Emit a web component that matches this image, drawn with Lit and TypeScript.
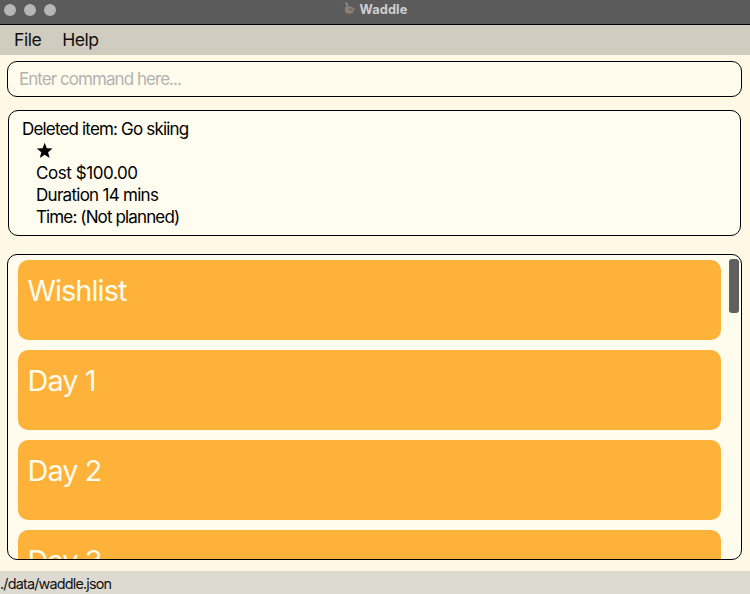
import { LitElement, html, css } from "lit";
import { customElement, property } from "lit/decorators.js";

@customElement("waddle-titlebar")
class WaddleTitlebar extends LitElement {
  static styles = css`
    :host { display: grid; grid-template-columns: 1fr auto 1fr; flex: none; height: 25px; background: #5b5b5b; border-bottom: 1px solid #000; }
    .lights { display: flex; gap: 8px; padding: 4px 0 0 4px; }
    .light { width: 12px; height: 12px; border-radius: 50%; background: #b6b6b6; }
    .title { display: flex; gap: 5px; padding-top: 1px; height: 17px; align-items: center; color: #cfcfcf; font-size: 12.8px; font-weight: 700; letter-spacing: 0.1px; }
    svg { display: block; width: 12px; height: 14px; margin-top: -2px; }
  `;
  render() {
    return html`
      <div class="lights"><span class="light"></span><span class="light"></span><span class="light"></span></div>
      <div class="title">
        <svg viewBox="0 0 12 14">
          <path d="M5.6 10.5V12.7H4.2M7.8 10.5V12.4H6.6" fill="none" stroke="#85604f" stroke-width="1" />
          <path d="M1.4 1.8Q1.9.2 3.5.3Q5.3.6 5.2 2.5L4.9 4.6Q7.6 3.8 9.5 5.4L11.5 6Q11.5 11.2 6.8 11.4Q2.1 11.4 1.7 8.4Q1.6 6.3 3 4.6L3 3L1.6 2.9Z" fill="#8d8177" />
          <path d="M.1 2.8L1.6 1.5L2.6 2.7L1.4 3.3Z" fill="#4b4644" />
          <path d="M5.3 6.9Q8 5.6 10.4 7Q9.7 9.2 7 9Q5.4 8.7 5.3 6.9" fill="#786d64" />
        </svg>
        <span>Waddle</span>
      </div>
      <span></span>
    `;
  }
}

@customElement("waddle-day-card")
class WaddleDayCard extends LitElement {
  @property() label = "";
  static styles = css`
    :host { display: block; flex: none; box-sizing: border-box; height: 80px; padding: 12px 9.5px; border-radius: 10px; background: #ffb239; color: #fffcee; font-size: 28.8px; line-height: 38px; letter-spacing: -0.9px; font-weight: 400; white-space: nowrap; }
  `;
  render() {
    return html`${this.label}`;
  }
}

@customElement("app-root")
class AppRoot extends LitElement {
  static styles = css`
    :host { display: flex; flex-direction: column; height: 594px; overflow: hidden; background: #fff8e5; color: #000; font-family: Inter, "Liberation Sans", sans-serif; }
    * { box-sizing: border-box; }
    .menu { display: flex; gap: 21px; height: 30px; padding-left: 14px; background: #d1ccc0; color: #111; font-size: 17.6px; line-height: 30px; letter-spacing: -0.5px; }
    .command { height: 36px; margin: 6px 8px 0 7px; padding: 0 11px; border: 1px solid #000; border-radius: 10px; background: #fffcee; color: #b3b3b1; font-size: 17px; line-height: 35px; letter-spacing: -0.95px; }
    .result { height: 126px; margin: 13px 9px 0 8px; padding: 7px 13px; border: 1px solid #000; border-radius: 10px; background: #fffcf0; font-size: 17px; line-height: 22px; letter-spacing: -0.83px; }
    .detail { height: 22px; padding-left: 14px; white-space: nowrap; }
    .cost { letter-spacing: -0.42px; }
    .duration { letter-spacing: -0.72px; }
    .time { letter-spacing: -0.87px; }
    .star { display: block; width: 17px; height: 22px; }
    .list { display: flex; height: 306px; margin: 18px 8px 0 7px; padding: 4px 2px 0 10px; gap: 8px; border: 1px solid #000; border-radius: 10px; background: #fffcee; overflow: hidden; }
    .cards { display: flex; flex-direction: column; flex: 1; gap: 10px; padding-top: 1px; }
    .thumb { width: 10px; height: 54px; border-radius: 3px; background: #606060; }
    .status { margin-top: 11px; height: 23px; background: #dddad2; color: #111; font-size: 14.4px; line-height: 26px; letter-spacing: -0.82px; }
    .status span, .menu span, .command span, .first span { white-space: nowrap; }
  `;
  render() {
    return html`
      <waddle-titlebar></waddle-titlebar>
      <div class="menu"><span class="file">File</span><span class="help">Help</span></div>
      <div class="command"><span>Enter command here...</span></div>
      <div class="result">
        <div class="first"><span>Deleted item: Go skiing</span></div>
        <div class="detail">
          <svg class="star" viewBox="-0.5 0 17 22"><path d="M8.2 2.7L10.3 8.2L16.1 8.5L11.6 12.2L13.1 17.9L8.2 14.7L3.3 17.9L4.8 12.2L.3 8.5L6.1 8.2Z" /></svg>
        </div>
        <div class="detail"><span class="cost">Cost $100.00</span></div>
        <div class="detail"><span class="duration">Duration 14 mins</span></div>
        <div class="detail"><span class="time">Time: (Not planned)</span></div>
      </div>
      <div class="list">
        <div class="cards">
          ${["Wishlist", "Day 1", "Day 2", "Day 3"].map((d) => html`<waddle-day-card label=${d}></waddle-day-card>`)}
        </div>
        <div class="thumb"></div>
      </div>
      <div class="status"><span>./data/waddle.json</span></div>
    `;
  }
}
